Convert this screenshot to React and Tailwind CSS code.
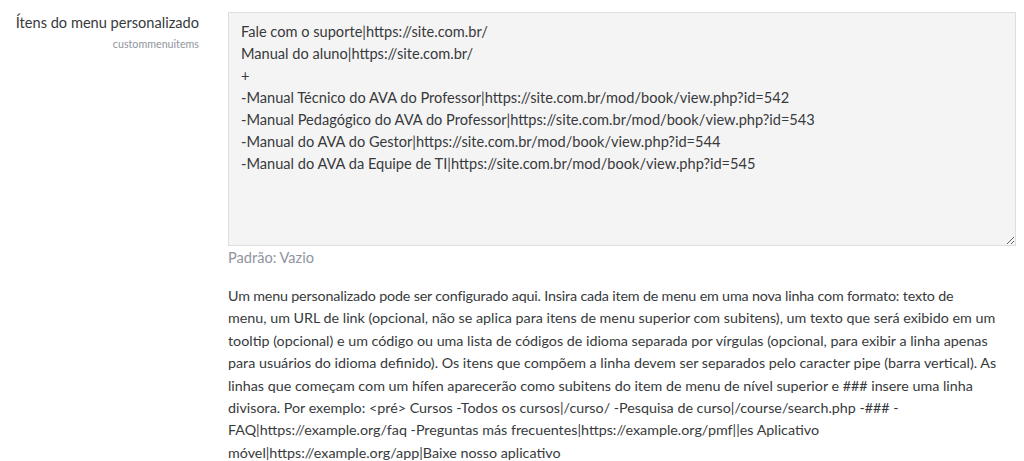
import { useState } from 'react';

const menuValue = [
  'Fale com o suporte|https://site.com.br/',
  'Manual do aluno|https://site.com.br/',
  '+',
  '-Manual Técnico do AVA do Professor|https://site.com.br/mod/book/view.php?id=542',
  '-Manual Pedagógico do AVA do Professor|https://site.com.br/mod/book/view.php?id=543',
  '-Manual do AVA do Gestor|https://site.com.br/mod/book/view.php?id=544',
  '-Manual do AVA da Equipe de TI|https://site.com.br/mod/book/view.php?id=545',
].join('\n');

const descLines = [
  'menu, um URL de link (opcional, não se aplica para itens de menu superior com subitens), um texto que será exibido em um',
  'tooltip (opcional) e um código ou uma lista de códigos de idioma separada por vírgulas (opcional, para exibir a linha apenas',
  'para usuários do idioma definido). Os itens que compõem a linha devem ser separados pelo caracter pipe (barra vertical). As',
  'linhas que começam com um hífen aparecerão como subitens do item de menu de nível superior e ### insere uma linha',
  'divisora. Por exemplo: <pré> Cursos -Todos os cursos|/curso/ -Pesquisa de curso|/course/search.php -### -',
  'FAQ|https://example.org/faq -Preguntas más frecuentes|https://example.org/pmf||es Aplicativo',
  'móvel|https://example.org/app|Baixe nosso aplicativo',
];

export default function App() {
  const [value, setValue] = useState(menuValue);

  return (
    <div className="w-[1024px] h-[461px] bg-white overflow-hidden font-['Lato','Open_Sans',sans-serif] text-[#373a3c]">
      <div className="flex pt-3">
        {/* Setting label */}
        <div className="w-[228px] shrink-0 pr-[29px] text-right pt-[1px]">
          <div className="text-[14.6px] leading-[20px] text-[#373a3c]">Ítens do menu personalizado</div>
          <div className="text-[10.7px] leading-[16px] text-[#8f959e] mt-[3px]">custommenuitems</div>
        </div>

        {/* Setting field */}
        <div className="w-[788px] shrink-0">
          <textarea
            value={value}
            onChange={(e) => setValue(e.target.value)}
            spellCheck={false}
            className="block w-full h-[234px] bg-[#f5f4f4] border border-[#dedede] rounded-none px-3 pt-[8px] text-[14.6px] leading-[22px] text-[#373a3c] font-['Lato',sans-serif] outline-none resize-y"
          />
          <div className="text-[14.6px] leading-[22px] text-[#8f959e] mt-[1px]">Padrão: Vazio</div>

          <div className="mt-[16px] text-[14.3px] leading-[22.4px] text-[#373a3c]">
            <div className="whitespace-nowrap tracking-[-0.17px]">
              Um menu personalizado pode ser configurado aqui. Insira cada item de menu em uma nova linha com formato: texto de
            </div>
            {descLines.map((line) => (
              <div key={line} className="whitespace-nowrap">{line}</div>
            ))}
          </div>
        </div>
      </div>
    </div>
  );
}
